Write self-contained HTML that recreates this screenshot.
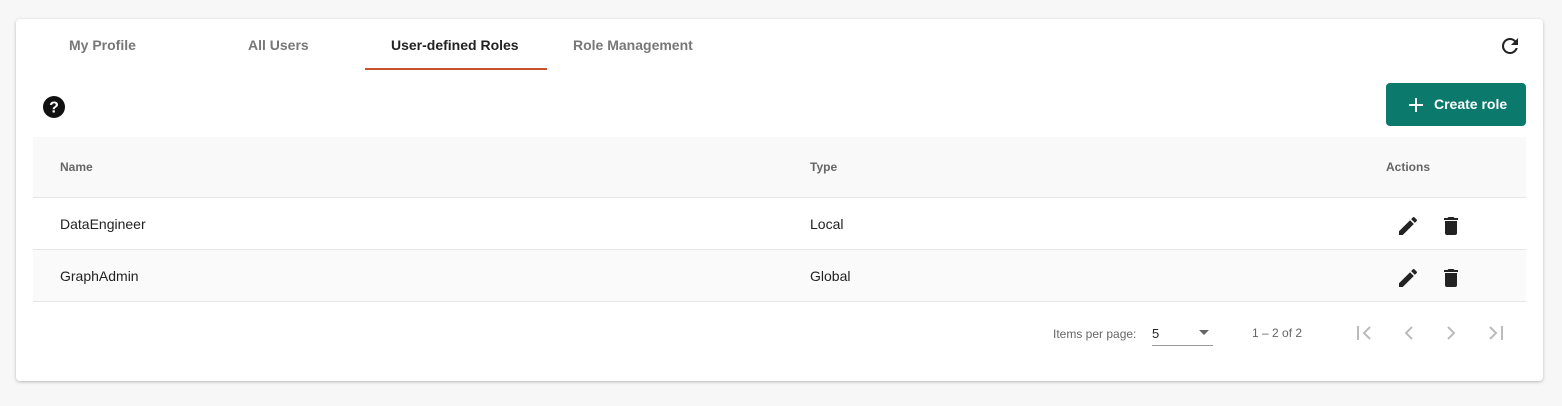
<!DOCTYPE html>
<html><head><style>
*{box-sizing:border-box;margin:0;padding:0}
body{width:1562px;height:406px;background:#f7f7f7;font-family:"Liberation Sans",sans-serif;position:relative;overflow:hidden}
.card{position:absolute;left:16px;top:19px;width:1527px;height:362px;background:#fff;border-radius:4px;box-shadow:0 1px 3px rgba(0,0,0,.25)}
.tab{position:absolute;top:18px;font-size:14px;font-weight:bold;color:#777}
.a{position:absolute}
.row{position:absolute;left:17px;width:1493px;border-bottom:1px solid #e6e6e6;font-size:14px;color:#222}
.row span{position:absolute;top:50%;transform:translateY(-50%)}
</style></head><body>
<div class="card">
 <div class="tab" style="left:53px">My Profile</div>
 <div class="tab" style="left:232px">All Users</div>
 <div class="tab" style="left:375px;color:#222">User-defined Roles</div>
 <div class="tab" style="left:557px">Role Management</div>
 <div class="a" style="left:349px;top:49px;width:182px;height:2px;background:#c9522f"></div>
 <svg class="a" style="left:1482px;top:15px" width="24" height="24" viewBox="0 0 24 24"><path fill="#222" d="M17.65 6.35A7.96 7.96 0 0 0 12 4a8 8 0 1 0 7.73 10h-2.08A6 6 0 1 1 12 6c1.66 0 3.14.69 4.22 1.78L13 11h7V4l-2.35 2.35z"/></svg>
 <svg class="a" style="left:26px;top:76px" width="24" height="24" viewBox="0 0 24 24"><circle cx="12" cy="12" r="11" fill="#111"/><text x="12" y="17.5" font-size="16" font-weight="bold" fill="#fff" text-anchor="middle" font-family="Liberation Sans">?</text></svg>
 <div class="a" style="left:1370px;top:64px;width:140px;height:43px;background:#0b7a6c;border-radius:4px;color:#fff;font-size:14px;font-weight:bold;line-height:43px;padding-left:48px">Create role</div>
 <svg class="a" style="left:1391px;top:77px" width="18" height="18" viewBox="0 0 18 18"><path d="M9 2v14M2 9h14" stroke="#fff" stroke-width="2"/></svg>
 <div class="row" style="top:118px;height:61px;background:#f9f9f9;font-size:12px;color:#666;font-weight:bold"><span style="left:27px">Name</span><span style="left:777px">Type</span><span style="left:1353px">Actions</span></div>
 <div class="row" style="top:179px;height:52px"><span style="left:27px">DataEngineer</span><span style="left:777px">Local</span></div>
 <div class="row" style="top:231px;height:52px;background:#fafafa"><span style="left:27px">GraphAdmin</span><span style="left:777px">Global</span></div>
 <svg class="a" style="left:1380px;top:195px" width="24" height="24" viewBox="0 0 24 24"><path fill="#222" d="M3 17.25V21h3.75L17.81 9.94l-3.750-3.75L3 17.25zM20.71 7.04a1 1 0 0 0 0-1.41l-2.34-2.34a1 1 0 0 0-1.41 0l-1.83 1.83 3.75 3.75 1.83-1.83z"/></svg>
 <svg class="a" style="left:1423px;top:195px" width="24" height="24" viewBox="0 0 24 24"><path fill="#222" d="M6 19a2 2 0 0 0 2 2h8a2 2 0 0 0 2-2V7H6v12zM19 4h-3.5l-1-1h-5l-1 1H5v2h14V4z"/></svg>
 <svg class="a" style="left:1380px;top:247px" width="24" height="24" viewBox="0 0 24 24"><path fill="#222" d="M3 17.25V21h3.75L17.81 9.94l-3.75-3.75L3 17.25zM20.71 7.04a1 1 0 0 0 0-1.41l-2.34-2.34a1 1 0 0 0-1.41 0l-1.83 1.83 3.75 3.75 1.83-1.830z"/></svg>
 <svg class="a" style="left:1423px;top:247px" width="24" height="24" viewBox="0 0 24 24"><path fill="#222" d="M6 19a2 2 0 0 0 2 2h8a2 2 0 0 0 2-2V7H6v12zM19 4h-3.5l-1-1h-5l-1 1H5v2h14V4z"/></svg>
 <div class="a" style="left:1037px;top:308px;font-size:12px;color:#666">Items per page:</div>
 <div class="a" style="left:1136px;top:307px;width:61px;height:20px;border-bottom:1px solid #999;font-size:13px;color:#222">5</div>
 <svg class="a" style="left:1182px;top:310px" width="12" height="8"><path d="M1 1h10L6 6z" fill="#666"/></svg>
 <div class="a" style="left:1236px;top:307px;font-size:12px;color:#666">1 – 2 of 2</div>
 <svg class="a" style="left:1335px;top:302px" width="180" height="24" viewBox="0 0 180 24"><g fill="none" stroke="#bbb" stroke-width="2"><path d="M7 5v14M19 6l-6 6 6 6"/><path d="M61 6l-6 6 6 6"/><path d="M97 6l6 6-6 6"/><path d="M139 6l6 6-6 6M151 5v14"/></g></svg>
</div>
</body></html>
